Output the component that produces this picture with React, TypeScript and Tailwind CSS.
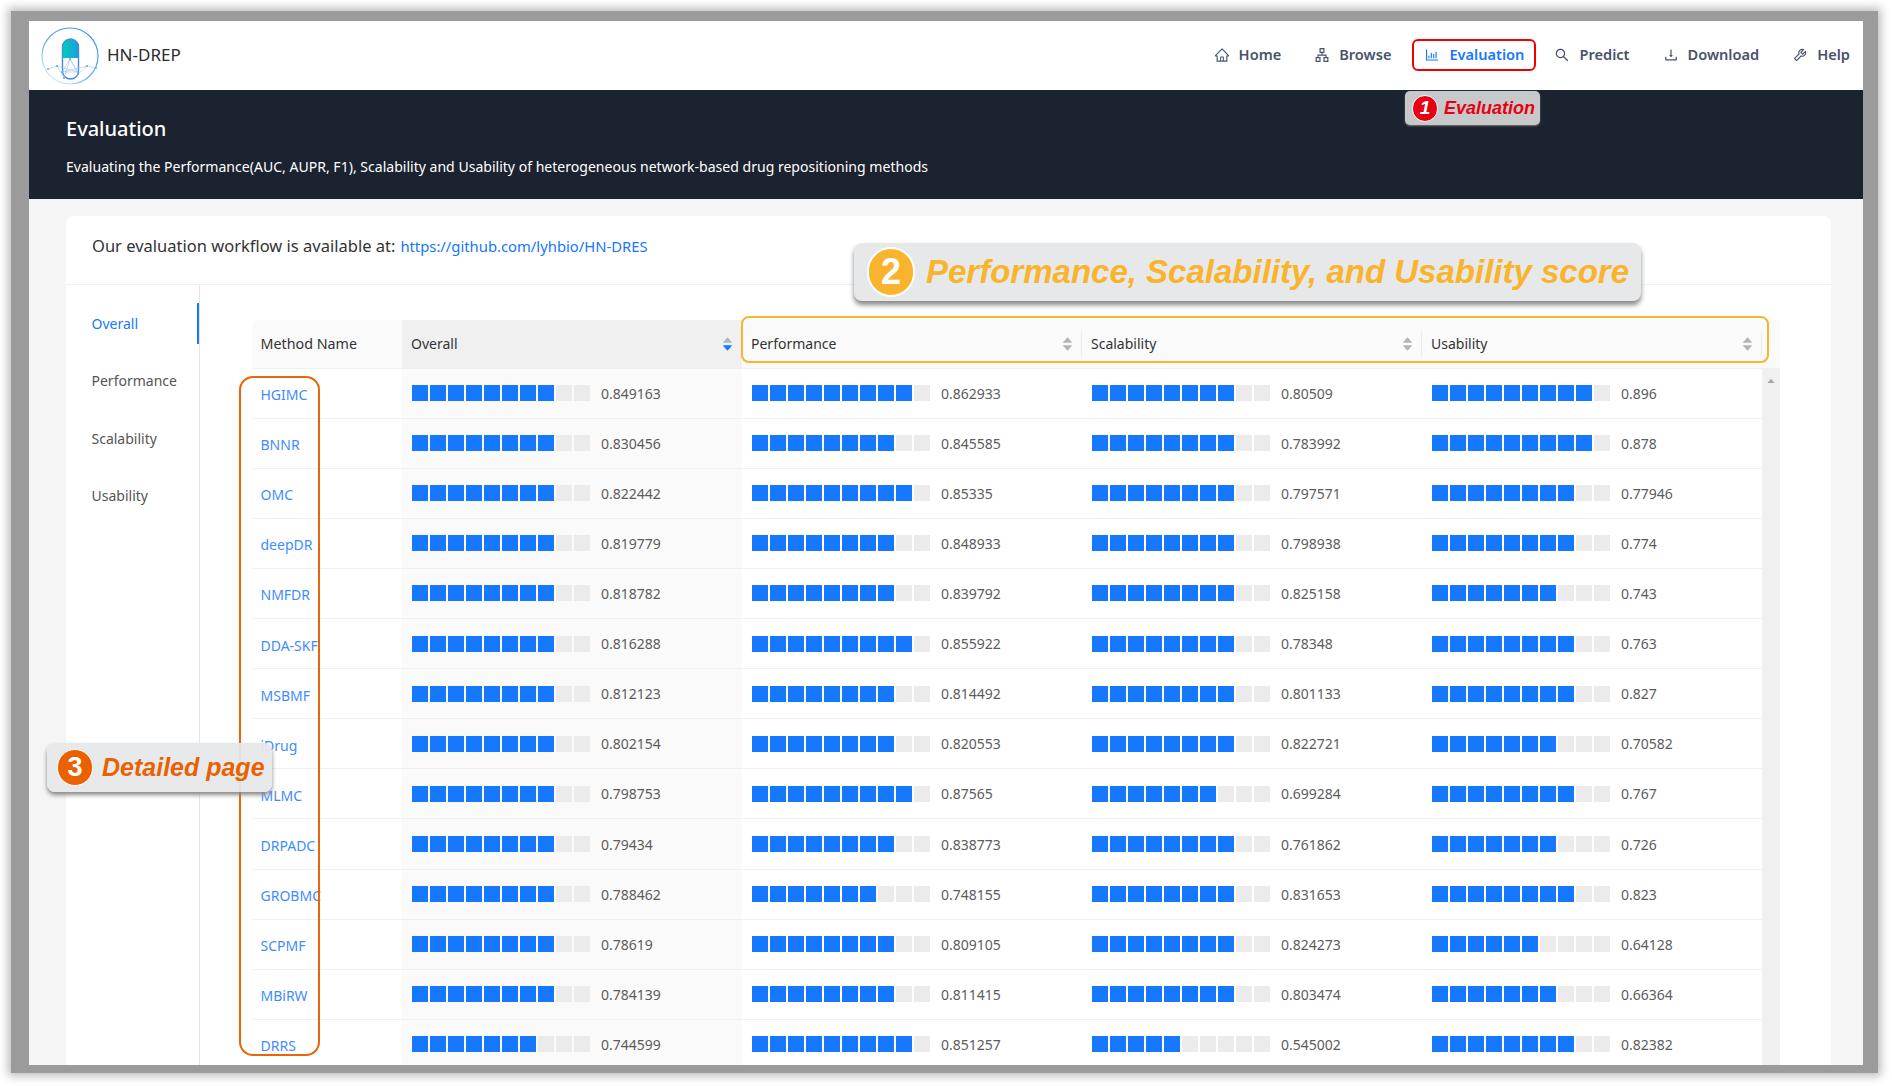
import {
  AiOutlineHome,
  AiOutlineApartment,
  AiOutlineBarChart,
  AiOutlineSearch,
  AiOutlineDownload,
  AiOutlineTool,
  AiFillCaretUp,
  AiFillCaretDown,
} from 'react-icons/ai'

const rows: [string, number, number, number, number][] = [
  ['HGIMC', 0.849163, 0.862933, 0.80509, 0.896],
  ['BNNR', 0.830456, 0.845585, 0.783992, 0.878],
  ['OMC', 0.822442, 0.85335, 0.797571, 0.77946],
  ['deepDR', 0.819779, 0.848933, 0.798938, 0.774],
  ['NMFDR', 0.818782, 0.839792, 0.825158, 0.743],
  ['DDA-SKF', 0.816288, 0.855922, 0.78348, 0.763],
  ['MSBMF', 0.812123, 0.814492, 0.801133, 0.827],
  ['iDrug', 0.802154, 0.820553, 0.822721, 0.70582],
  ['MLMC', 0.798753, 0.87565, 0.699284, 0.767],
  ['DRPADC', 0.79434, 0.838773, 0.761862, 0.726],
  ['GROBMC', 0.788462, 0.748155, 0.831653, 0.823],
  ['SCPMF', 0.78619, 0.809105, 0.824273, 0.64128],
  ['MBiRW', 0.784139, 0.811415, 0.803474, 0.66364],
  ['DRRS', 0.744599, 0.851257, 0.545002, 0.82382],
]

const navItems = [
  { label: 'Home', icon: AiOutlineHome },
  { label: 'Browse', icon: AiOutlineApartment },
  { label: 'Evaluation', icon: AiOutlineBarChart, active: true },
  { label: 'Predict', icon: AiOutlineSearch },
  { label: 'Download', icon: AiOutlineDownload },
  { label: 'Help', icon: AiOutlineTool },
]

function Logo() {
  return (
    <svg width="60" height="62" viewBox="0 0 60 62" className="shrink-0">
      <defs>
        <linearGradient id="ring" x1="0.8" y1="0.1" x2="0.2" y2="0.95">
          <stop offset="0" stopColor="#3f94e0" />
          <stop offset="0.6" stopColor="#6db0ea" />
          <stop offset="1" stopColor="#e3eff9" />
        </linearGradient>
        <linearGradient id="pill" x1="0" y1="0" x2="1" y2="0">
          <stop offset="0" stopColor="#00d0b4" />
          <stop offset="1" stopColor="#1d9be6" />
        </linearGradient>
      </defs>
      <circle cx="30" cy="31" r="28" fill="none" stroke="url(#ring)" strokeWidth="1.2" />
      <path d="M22.5 33 V22 a8 8 0 0 1 16 0 V33 Z" fill="url(#pill)" />
      <rect x="22.5" y="14" width="16" height="40" rx="8" fill="none" stroke="#3d8fdc" strokeWidth="1.4" />
      <g fill="none" stroke="#9cc3e8" strokeWidth="0.6">
        <path d="M8 44 L17 41 L24 53 L30 34 L38 49 L47 41 L56 43" />
        <path d="M30 34 L22 47 L38 47 Z" />
        <path d="M17 41 L38 47 M22 47 L47 41 M30 33 V34" />
      </g>
      <g fill="#6aa6dd">
        <circle cx="8" cy="44" r="1" />
        <circle cx="17" cy="41" r="1" />
        <circle cx="24" cy="53" r="1" />
        <circle cx="30" cy="34" r="1" />
        <circle cx="38" cy="49" r="1" />
        <circle cx="47" cy="41" r="1" />
        <circle cx="56" cy="43" r="1" />
        <circle cx="22" cy="47" r="1" />
      </g>
    </svg>
  )
}

function Steps({ value }: { value: number }) {
  const filled = Math.round(value * 10)
  return (
    <div className="flex items-center">
      <div className="flex gap-[1.5px]">
        {Array.from({ length: 10 }).map((_, i) => (
          <div key={i} className={i < filled ? 'h-4 w-[16.5px] bg-[#1677ff]' : 'h-4 w-[16.5px] bg-[#ebebeb]'} />
        ))}
      </div>
      <span className="ml-[11px] text-[14px] text-[#5c5c5c]">{value}</span>
    </div>
  )
}

function HeaderCell({ label, sorted }: { label: string; sorted?: boolean }) {
  return (
    <div className={`relative flex h-full w-[340px] items-center pl-[9px] ${sorted ? 'bg-[#f0f0f0]' : 'bg-[#fafafa]'}`}>
      <span className="text-[14px] text-[#333]">{label}</span>
      <div className="absolute right-[8px] top-1/2 flex -translate-y-1/2 flex-col text-[13px] leading-none text-[#b5b5b5]">
        <AiFillCaretUp className="-mb-[5px]" />
        <AiFillCaretDown className={sorted ? 'text-[#1677ff]' : ''} />
      </div>
      {!sorted && <div className="absolute right-0 top-1/2 h-[26px] w-px -translate-y-1/2 bg-[#ececec]" />}
    </div>
  )
}

export default function App() {
  return (
    <div className="h-[1086px] w-[1892px] overflow-hidden bg-white pl-[11px] pt-[11px] font-['Noto_Sans','Open_Sans',sans-serif]">
      <div className="h-[1062px] w-[1867px] border-b-[8px] border-l-[18px] border-r-[15px] border-t-[10px] border-[#9b9b9b] shadow-[0_0_9px_3px_#bbbbbb]">
        <div className="relative flex h-full flex-col overflow-hidden bg-[#f5f5f5]">
          <header className="flex h-[69px] shrink-0 items-center bg-white pl-[11px] pr-[1px]">
            <Logo />
            <span className="ml-[7px] pb-[2px] text-[17px] text-[#2b2b2b]">HN-DREP</span>
            <nav className="ml-auto flex items-center gap-[9px] pb-[2px]">
              {navItems.map((item) => (
                <div
                  key={item.label}
                  className={`flex h-8 items-center gap-[9px] rounded-[6px] border-2 px-[10px] text-[14.6px] font-semibold ${
                    item.active ? 'mr-[-3px] border-[#f00000] text-[#1677ff]' : 'border-transparent text-[#46536b]'
                  }`}
                >
                  <item.icon className="text-[16px]" />
                  {item.label}
                </div>
              ))}
            </nav>
          </header>

          <div className="flex h-[109px] shrink-0 flex-col bg-[#1b2330] pl-[37px] pt-[24px] text-white">
            <h1 className="text-[20px] font-medium leading-[30px]">Evaluation</h1>
            <p className="mt-[12px] text-[14.05px] leading-[22px]">
              Evaluating the Performance(AUC, AUPR, F1), Scalability and Usability of heterogeneous network-based drug repositioning methods
            </p>
          </div>

          <div className="min-h-0 flex-1 pl-[37px] pr-[32px] pt-[17px]">
            <div className="h-[900px] rounded-t-[8px] bg-white">
              <div className="flex h-[69px] items-center border-b border-[#f0f0f0] pb-[7px] pl-[26px]">
                <span className="text-[16.5px] text-[#333]">Our evaluation workflow is available at:</span>
                <a className="ml-[5px] text-[14.8px] text-[#1677ff]">https://github.com/lyhbio/HN-DRES</a>
              </div>

              <div className="flex">
                <aside className="h-[800px] w-[134px] shrink-0 border-r border-[#e4e4e4] pt-[17.5px]">
                  {['Overall', 'Performance', 'Scalability', 'Usability'].map((tab, i) => (
                    <div
                      key={tab}
                      className={`mb-[16.6px] flex h-[41px] items-center pl-[25.5px] text-[14px] ${
                        i === 0 ? 'border-r-2 border-[#1677ff] text-[#1677ff]' : 'text-[#555]'
                      }`}
                    >
                      {tab}
                    </div>
                  ))}
                </aside>

                <div className="ml-[52px] w-[1528px] pt-[35px]">
                  <div className="flex h-[48.5px] overflow-hidden rounded-tl-[8px] border-b border-[#f0f0f0]">
                    <div className="flex h-full w-[150px] items-center bg-[#fafafa] pl-[8.5px] text-[14.3px] text-[#333]">Method Name</div>
                    <HeaderCell label="Overall" sorted />
                    <HeaderCell label="Performance" />
                    <HeaderCell label="Scalability" />
                    <HeaderCell label="Usability" />
                    <div className="h-full w-[18px] bg-[#fafafa]" />
                  </div>
                  <div className="flex">
                    <div className="w-[1510px]">
                      {rows.map(([name, overall, perf, scal, usab]) => (
                        <div key={name} className="flex h-[50.12px] border-b border-[#f0f0f0]">
                          <div className="flex w-[150px] items-center pl-[8.5px] pt-[3px] text-[14px] text-[#3f8cff]">{name}</div>
                          <div className="flex w-[340px] items-center bg-[#fafafa] pl-[9.5px]">
                            <Steps value={overall} />
                          </div>
                          <div className="flex w-[340px] items-center pl-[9.5px]">
                            <Steps value={perf} />
                          </div>
                          <div className="flex w-[340px] items-center pl-[9.5px]">
                            <Steps value={scal} />
                          </div>
                          <div className="flex w-[340px] items-center pl-[9.5px]">
                            <Steps value={usab} />
                          </div>
                        </div>
                      ))}
                    </div>
                    <div className="flex h-[720px] w-[18px] justify-center bg-[#f0f0f0] pt-[7px] text-[10px] text-[#a8a8a8]">
                      <AiFillCaretUp />
                    </div>
                  </div>
                </div>
              </div>
            </div>
          </div>

          {/* callouts drawn over the page */}
          <div className="absolute left-[1376px] top-[70px] flex h-[34px] w-[135px] items-center rounded-[5px] bg-[#c6c8ca] pl-[7px] shadow-[0_1px_2px_#777]">
            <span className="flex h-[27px] w-[26px] items-center justify-center rounded-full border border-white bg-[#e60012] font-['Liberation_Sans',sans-serif] text-[19px] font-bold italic text-white">1</span>
            <span className="ml-[6px] font-['Liberation_Sans',sans-serif] text-[18px] font-bold italic text-[#e60012]">Evaluation</span>
          </div>

          <div className="absolute left-[825px] top-[222px] flex h-[58px] w-[787px] items-center rounded-[8px] bg-[#e7e8ea] pl-[13px] shadow-[0_4px_5px_#888]">
            <span className="flex h-[50px] w-[48px] items-center justify-center rounded-full border-2 border-white bg-[#f9b42d] font-['Liberation_Sans',sans-serif] text-[36px] font-bold text-white">2</span>
            <span className="ml-[11px] whitespace-nowrap font-['Liberation_Sans',sans-serif] text-[33px] font-bold italic text-[#f9b42d]">Performance, Scalability, and Usability score</span>
          </div>

          <div className="absolute left-[712px] top-[295px] h-[47px] w-[1028px] rounded-[8px] border-2 border-[#f9b42d]" />

          <div className="absolute left-[210px] top-[355px] h-[680px] w-[81px] rounded-[14px] border-2 border-[#e8650d]" />

          <div className="absolute left-[18px] top-[722px] flex h-[49px] w-[225px] items-center rounded-[8px] bg-[#e7e8ea]/95 pl-[10px] shadow-[0_3px_4px_#888]">
            <span className="flex h-[37px] w-[36px] items-center justify-center rounded-full border border-white bg-[#e96100] font-['Liberation_Sans',sans-serif] text-[27px] font-bold text-white">3</span>
            <span className="ml-[9px] whitespace-nowrap font-['Liberation_Sans',sans-serif] text-[25px] font-bold italic text-[#e96100]">Detailed page</span>
          </div>
        </div>
      </div>
    </div>
  )
}
